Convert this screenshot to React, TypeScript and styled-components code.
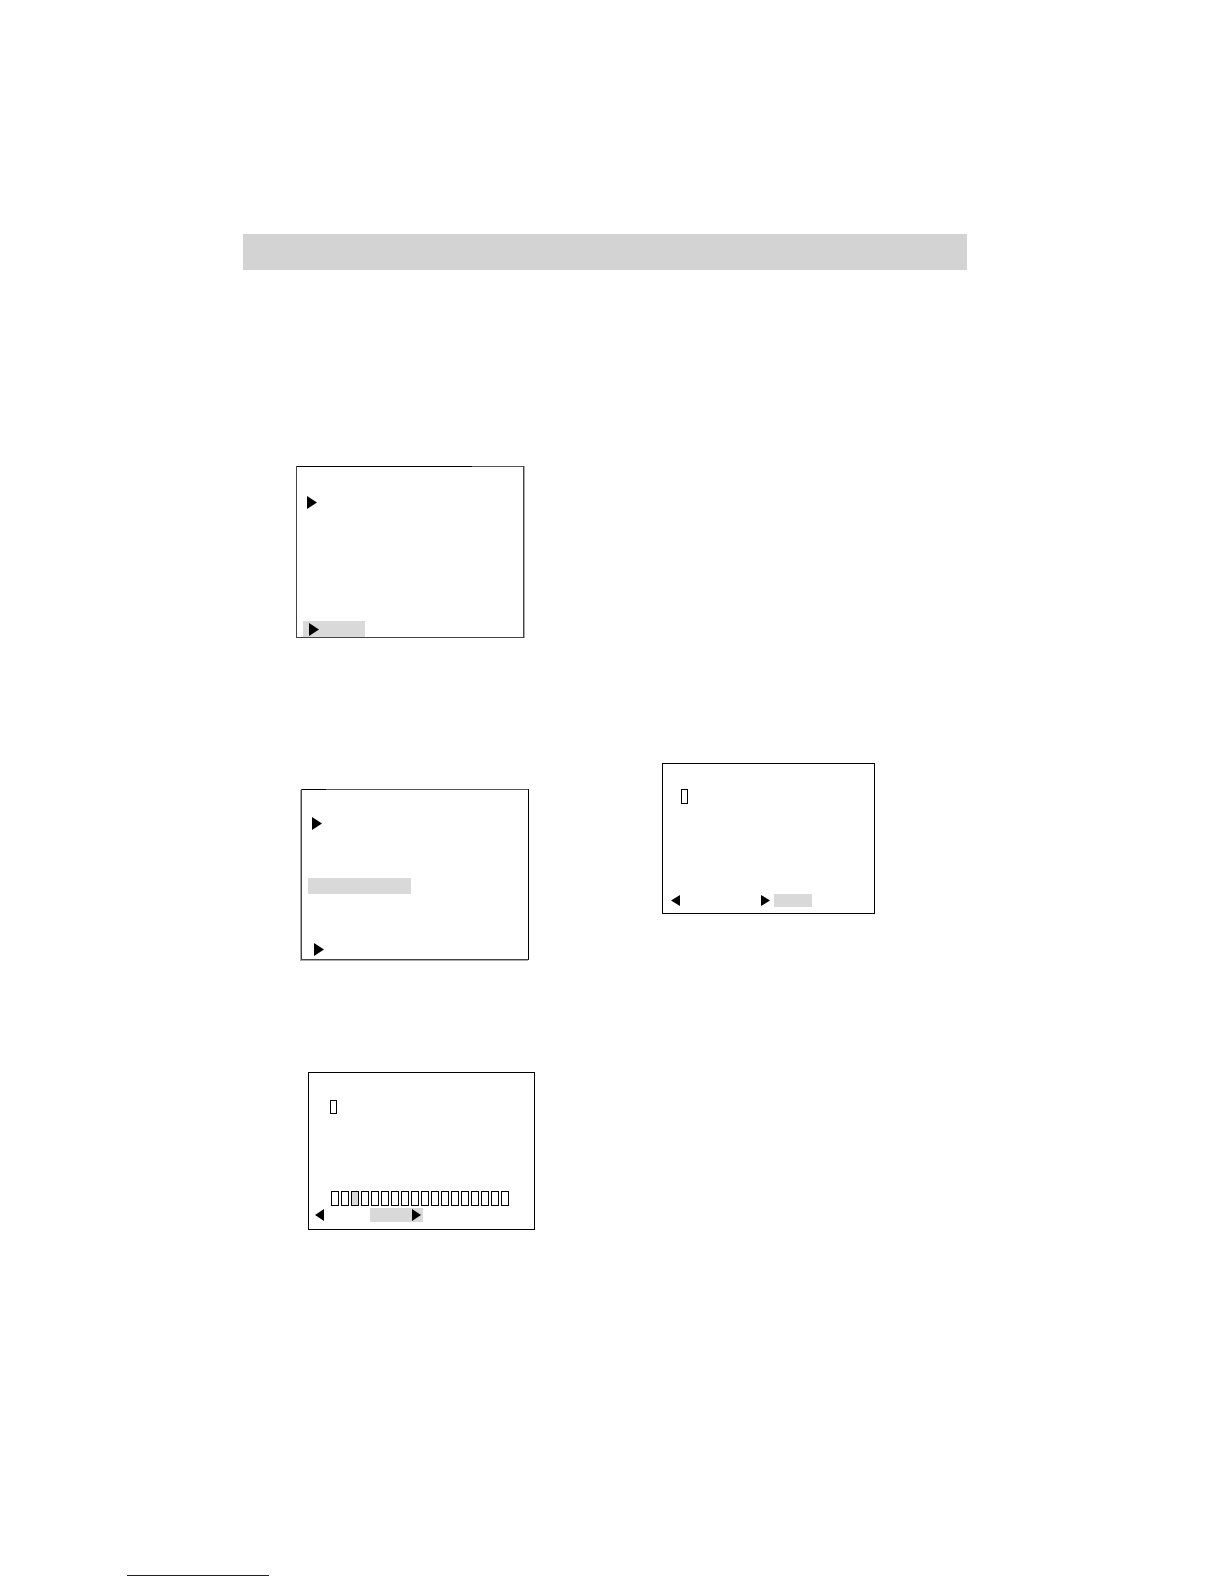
import React from "react";
import styled, { createGlobalStyle } from "styled-components";

const GlobalStyle = createGlobalStyle`
  body {
    margin: 0;
    background: #fff;
    font-family: "Liberation Sans", Arial, sans-serif;
  }
`;

const Page = styled.main`
  box-sizing: border-box;
  padding: 234px 21% 0 243px;
`;

const TitleBar = styled.header`
  height: 36px;
  background: #d3d3d3;
`;

const Columns = styled.div`
  display: grid;
  grid-template-columns: 419fr 305fr;
  align-items: start;
  padding-top: 196px;
`;

const Column = styled.div<{ $top?: number }>`
  display: flex;
  flex-direction: column;
  align-items: flex-start;
  padding-top: ${(p) => p.$top ?? 0}px;
`;

const Screen = styled.section<{
  $width: number;
  $indent?: number;
  $gap?: number;
  $bottom?: number;
  $edge?: string;
  $topEdge?: string;
  $shadow?: string;
}>`
  box-sizing: border-box;
  width: ${(p) => p.$width}px;
  margin-left: ${(p) => p.$indent ?? 0}px;
  margin-top: ${(p) => p.$gap ?? 0}px;
  padding-top: 1px;
  padding-bottom: ${(p) => p.$bottom ?? 0}px;
  border: solid;
  border-width: 0 1px 1px;
  border-color: ${(p) => p.$edge ?? "#000"};
  background: ${(p) => p.$topEdge ?? "linear-gradient(#000, #000)"} border-box top / 100% 1px no-repeat;
  box-shadow: ${(p) => p.$shadow ?? "none"};
`;

const Row = styled.div<{ $top: number; $left: number; $gap?: number }>`
  display: flex;
  align-items: center;
  gap: ${(p) => p.$gap ?? 0}px;
  margin-top: ${(p) => p.$top}px;
  padding-left: ${(p) => p.$left}px;
`;

const Highlight = styled.div<{ $width: number; $height: number; $pad?: number }>`
  box-sizing: border-box;
  display: flex;
  align-items: center;
  width: ${(p) => p.$width}px;
  height: ${(p) => p.$height}px;
  padding-left: ${(p) => p.$pad ?? 0}px;
  background: #d9d9d9;
`;

const Cell = styled.span<{ $width?: number; $height?: number; $filled?: boolean }>`
  box-sizing: border-box;
  width: ${(p) => p.$width ?? 8}px;
  height: ${(p) => p.$height ?? 15}px;
  border: 1px solid #000;
  background: ${(p) => (p.$filled ? "#d9d9d9" : "transparent")};
`;

const Arrow = styled.svg`
  display: block;
  flex: none;
`;

const Spread = styled.span<{ $width: number }>`
  flex: none;
  width: ${(p) => p.$width}px;
`;

const Footer = styled.footer`
  display: flex;
  padding: 337px 0 0 127px;
`;

const FooterLink = styled.a`
  width: 142px;
  height: 8px;
  border-bottom: 1px solid #16167a;
`;

function Pointer({ left, width = 10, height = 13 }: { left?: boolean; width?: number; height?: number }) {
  return (
    <Arrow width={width} height={height} viewBox="0 0 10 12" preserveAspectRatio="none" aria-hidden="true">
      <path d={left ? "M10 0V12L0 6Z" : "M0 0V12L10 6Z"} fill="#000" />
    </Arrow>
  );
}

const cells = Array.from({ length: 18 }, (_, i) => i);

export default function App() {
  return (
    <>
      <GlobalStyle />
      <Page>
        <TitleBar />
        <Columns>
          <Column>
            <Screen
              $width={228}
              $indent={53}
              $edge="#444"
              $topEdge="linear-gradient(90deg, #000 77%, #555 77%)"
              $shadow="1px 0 #aaa"
            >
              <Row $top={29} $left={10}>
                <Pointer />
              </Row>
              <Row $top={112} $left={6}>
                <Highlight $width={62} $height={16} $pad={6}>
                  <Pointer />
                </Highlight>
              </Row>
            </Screen>
            <Screen
              $width={228}
              $indent={58}
              $gap={151}
              $bottom={3}
              $edge="#000 #000 #444 #444"
              $topEdge="linear-gradient(90deg, #000 11%, #555 11%)"
              $shadow="-1px 1px #aaa"
            >
              <Row $top={27} $left={10}>
                <Pointer />
              </Row>
              <Row $top={48} $left={6}>
                <Highlight $width={103} $height={16} />
              </Row>
              <Row $top={49} $left={12}>
                <Pointer />
              </Row>
            </Screen>
            <Screen $width={227} $indent={65} $gap={112} $bottom={7}>
              <Row $top={27} $left={21}>
                <Cell $width={7} $height={14} />
              </Row>
              <Row $top={77} $left={22} $gap={2}>
                {cells.map((i) => (
                  <Cell key={i} $filled={i === 2} />
                ))}
              </Row>
              <Row $top={2} $left={6}>
                <Pointer left width={9} height={12} />
                <Spread $width={46} />
                <Highlight $width={53} $height={14} $pad={42}>
                  <Pointer width={9} height={12} />
                </Highlight>
              </Row>
            </Screen>
          </Column>
          <Column $top={297}>
            <Screen $width={213} $bottom={6}>
              <Row $top={25} $left={18}>
                <Cell $width={7} />
              </Row>
              <Row $top={90} $left={8}>
                <Pointer left width={9} height={11} />
                <Spread $width={81} />
                <Pointer width={9} height={11} />
                <Spread $width={4} />
                <Highlight $width={38} $height={13} />
              </Row>
            </Screen>
          </Column>
        </Columns>
      </Page>
      <Footer>
        <FooterLink href="#" aria-label="Contents" />
      </Footer>
    </>
  );
}
